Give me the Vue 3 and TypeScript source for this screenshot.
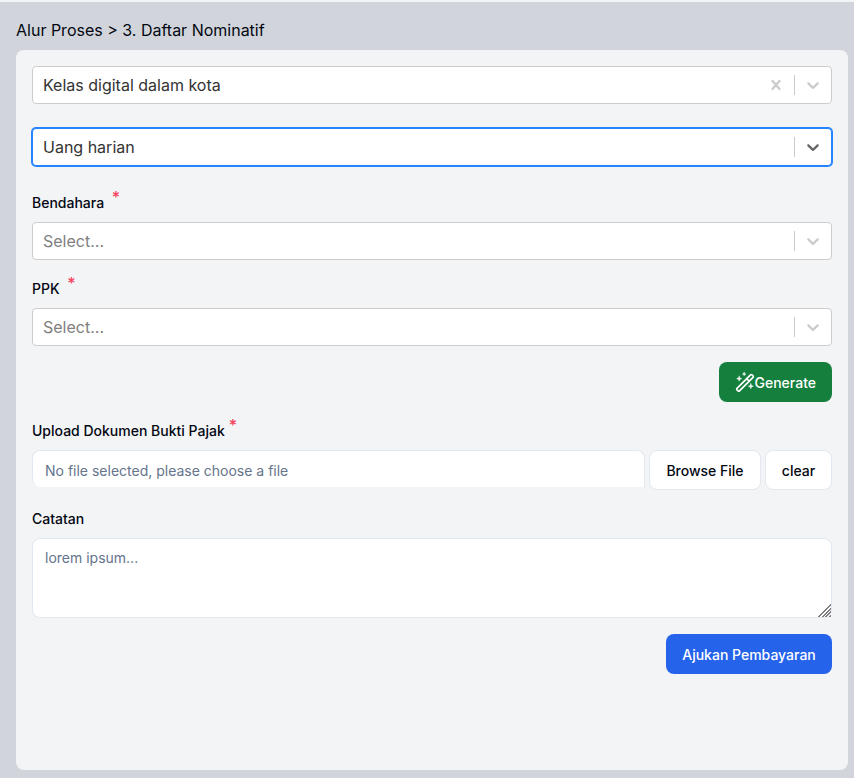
<script setup lang="ts">
const chevron = 'M4.516 7.548c0.436-0.446 1.043-0.481 1.576 0l3.908 3.747 3.908-3.747c0.533-0.481 1.141-0.446 1.574 0 0.436 0.445 0.408 1.197 0 1.615-0.406 0.418-4.695 4.502-4.695 4.502-0.217 0.223-0.502 0.335-0.787 0.335s-0.57-0.112-0.789-0.335c0 0-4.287-4.084-4.695-4.502s-0.436-1.17 0-1.615z'
const cross = 'M14.348 14.849c-0.469 0.469-1.229 0.469-1.697 0l-2.651-3.030-2.651 3.029c-0.469 0.469-1.229 0.469-1.697 0-0.469-0.469-0.469-1.229 0-1.697l2.758-3.15-2.759-3.152c-0.469-0.469-0.469-1.228 0-1.697s1.228-0.469 1.697 0l2.652 3.031 2.651-3.031c0.469-0.469 1.228-0.469 1.697 0s0.469 1.229 0 1.697l-2.758 3.152 2.758 3.15c0.469 0.469 0.469 1.229 0 1.698z'
</script>

<template>
  <div class="page">
    <div class="crumb">Alur Proses &gt; 3. Daftar Nominatif</div>
    <div class="card">
      <div class="select first">
        <span class="value">Kelas digital dalam kota</span>
        <svg class="ind" viewBox="0 0 20 20"><path :d="cross" /></svg>
        <span class="sep"></span>
        <svg class="ind" viewBox="0 0 20 20"><path :d="chevron" /></svg>
      </div>

      <div class="select focused second">
        <span class="value">Uang harian</span>
        <span class="sep"></span>
        <svg class="ind" viewBox="0 0 20 20"><path :d="chevron" /></svg>
      </div>

      <label class="label bendahara">Bendahara <sup class="req">*</sup></label>
      <div class="select">
        <span class="value placeholder">Select...</span>
        <span class="sep"></span>
        <svg class="ind" viewBox="0 0 20 20"><path :d="chevron" /></svg>
      </div>

      <label class="label ppk">PPK <sup class="req">*</sup></label>
      <div class="select">
        <span class="value placeholder">Select...</span>
        <span class="sep"></span>
        <svg class="ind" viewBox="0 0 20 20"><path :d="chevron" /></svg>
      </div>

      <div class="actions generate-row">
        <button class="btn green">
          <svg class="wand" viewBox="0 0 24 24">
            <path d="m21.64 4.64-1.28-1.28a1.21 1.21 0 0 0-1.72 0L2.36 19.64a1.21 1.21 0 0 0 0 1.72l1.28 1.28a1.2 1.2 0 0 0 1.72 0L21.64 6.36a1.2 1.2 0 0 0 0-1.72" />
            <path d="m14 8 3 3" />
            <path class="star" d="M5 5l.8 2.2L8 8l-2.2.8L5 11l-.8-2.2L2 8l2.2-.8z" />
            <path class="star" d="M11 0.5l.6 1.4L13 2.5l-1.4.6L11 4.5l-.6-1.4L9 2.5l1.4-.6z" />
            <path class="star" d="M19 14l.8 2.2L22 17l-2.2.8L19 20l-.8-2.2L16 17l2.2-.8z" />
          </svg>
          <span>Generate</span>
        </button>
      </div>

      <label class="label upload">Upload Dokumen Bukti Pajak<sup class="req">*</sup></label>
      <div class="file-row">
        <input class="file-input" placeholder="No file selected, please choose a file" readonly />
        <button class="btn light browse">Browse File</button>
        <button class="btn light clear">clear</button>
      </div>

      <label class="label catatan">Catatan</label>
      <textarea class="notes" placeholder="lorem ipsum..."></textarea>

      <div class="actions submit-row">
        <button class="btn blue">Ajukan Pembayaran</button>
      </div>
    </div>
  </div>
</template>

<style>
html,
body {
  margin: 0;
  background: #d1d5db;
}
</style>

<style scoped>
.page {
  height: 778px;
  box-sizing: border-box;
  background: #d1d5db;
  border-top: 2px solid #f3f4f6;
  padding: 0 6px 8px 16px;
  display: flex;
  flex-direction: column;
  font-family: Inter, "Liberation Sans", sans-serif;
  color: #030712;
}

.crumb {
  height: 48px;
  display: flex;
  align-items: center;
  padding-top: 7px;
  box-sizing: border-box;
  font-size: 16px;
}

.card {
  flex: 1;
  background: #f3f4f6;
  border-radius: 8px;
  padding: 16px;
  display: flex;
  flex-direction: column;
}

.select {
  height: 38px;
  box-sizing: border-box;
  flex-shrink: 0;
  background: #fff;
  border: 1px solid #ccc;
  border-radius: 4px;
  display: flex;
  align-items: center;
  padding-left: 10px;
  padding-right: 8px;
  font-size: 16px;
  color: #333;
}

.select.second {
  margin-top: 24px;
}

.select.focused {
  border-color: #2684ff;
  box-shadow: 0 0 0 1px #2684ff;
}

.value {
  flex: 1;
}

.placeholder {
  color: #808080;
}

.sep {
  width: 1px;
  height: 20px;
  background: #ccc;
  margin: 0 8px;
}

.ind {
  width: 20px;
  height: 20px;
  fill: #ccc;
}

.focused .ind {
  fill: #666;
}

.label {
  display: block;
  font-size: 14px;
  font-weight: 500;
  line-height: 20px;
  color: #030712;
}

.bendahara {
  margin-top: 27px;
  margin-bottom: 9px;
}

.ppk,
.upload,
.catatan {
  margin-top: 19px;
  margin-bottom: 9px;
}

.req {
  color: #f5405a;
  font-size: 16px;
  line-height: 0;
  margin-left: 4px;
  vertical-align: 5px;
}

.actions {
  display: flex;
  justify-content: flex-end;
}

.generate-row,
.submit-row {
  margin-top: 16px;
}

.btn {
  height: 40px;
  box-sizing: border-box;
  border: 0;
  border-radius: 8px;
  font-family: inherit;
  font-size: 14px;
  font-weight: 500;
  padding: 0 16px;
  display: inline-flex;
  align-items: center;
  justify-content: center;
}

.green {
  background: #15803d;
  color: #fff;
}

.blue {
  background: #2563eb;
  color: #fff;
  width: 166px;
}

.wand {
  width: 20px;
  height: 20px;
  fill: none;
  stroke: #fff;
  stroke-width: 2;
  stroke-linecap: round;
  stroke-linejoin: round;
}

.wand .star {
  fill: #fff;
  stroke-width: 0.6;
}

.file-row {
  display: flex;
  gap: 4px;
  align-items: flex-start;
}

.file-input {
  flex: 1;
  min-width: 0;
  height: 37px;
  box-sizing: border-box;
  border: 1px solid #e2e8f0;
  border-bottom: 0;
  border-radius: 8px 8px 0 8px;
  background: #fff;
  padding: 2px 12px 0;
  font-family: inherit;
  font-size: 14px;
  outline: none;
}

.file-input::placeholder,
.notes::placeholder {
  color: #64748b;
}

.light {
  background: #fff;
  border: 1px solid #e2e8f0;
  color: #030712;
}

.browse {
  width: 112px;
}

.clear {
  width: 67px;
}

.notes {
  height: 80px;
  box-sizing: border-box;
  flex-shrink: 0;
  border: 1px solid #e2e8f0;
  border-radius: 8px;
  background: #fff;
  padding: 9px 12px;
  font-family: inherit;
  font-size: 14px;
  line-height: 20px;
  outline: none;
}

.notes::-webkit-resizer {
  background:
    linear-gradient(135deg, #fff 50%, transparent 50%),
    repeating-linear-gradient(135deg, transparent 0, transparent 1.3px, #808080 1.3px, #808080 2.6px);
}
</style>
